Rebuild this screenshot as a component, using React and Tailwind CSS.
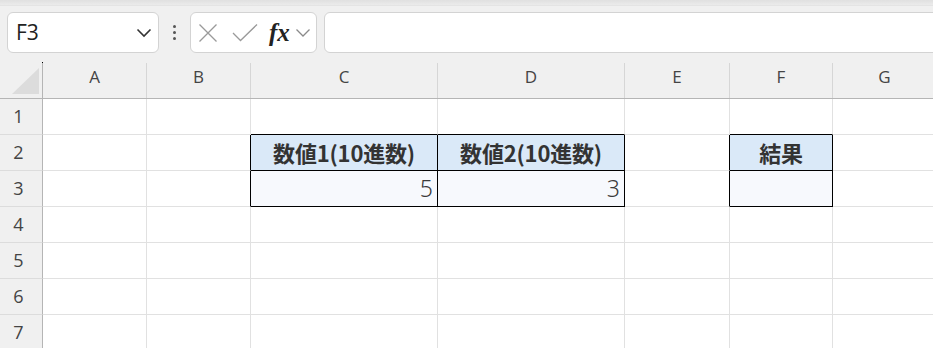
import React from "react";

const cols = [
  { key: "A", w: "w-[104px]" },
  { key: "B", w: "w-[104px]" },
  { key: "C", w: "w-[187px]" },
  { key: "D", w: "w-[187px]" },
  { key: "E", w: "w-[105px]" },
  { key: "F", w: "w-[103px]" },
  { key: "G", w: "w-[104px]" },
];

const cells = {
  C2: { text: "数値1(10進数)", head: true },
  D2: { text: "数値2(10進数)", head: true },
  F2: { text: "結果", head: true },
  C3: { text: "5" },
  D3: { text: "3" },
  F3: { text: "" },
};

function borders(r, c) {
  const right = (r === 2 || r === 3) && ["B", "C", "D", "E", "F"].includes(c);
  const bottom = (r >= 1 && r <= 3) && ["C", "D", "F"].includes(c);
  return [
    right ? "border-r-black" : "border-r-[#e1e1e1]",
    bottom ? "border-b-black" : "border-b-[#e1e1e1]",
  ].join(" ");
}

function Cell({ r, c, w }) {
  const data = cells[c + r];
  let bg = "bg-white";
  if (data) bg = data.head ? "bg-[#dae9f8]" : "bg-[#f7f9fd]";
  return (
    <div
      className={`${w} shrink-0 h-full border-r border-b ${borders(r, c)} ${bg} flex items-center ${
        data && data.head ? "justify-center" : "justify-end pr-[4px]"
      }`}
    >
      {data && data.head && (
        <span className="text-[22px] font-bold text-[#333] tracking-[-0.2px]">{data.text}</span>
      )}
      {data && !data.head && (
        <span
          className="text-[23px] text-[#3a3a3a]"
          style={{ fontFamily: '"Noto Sans", "Open Sans", sans-serif', fontWeight: 300 }}
        >
          {data.text}
        </span>
      )}
    </div>
  );
}

export default function App() {
  return (
    <div
      className="w-[933px] h-[348px] overflow-hidden bg-[#f0f0f0] relative"
      style={{ fontFamily: '"Noto Sans CJK JP", "Noto Sans", sans-serif' }}
    >
      {/* toolbar */}
      <div className="h-[63px] relative">
        <div className="h-[6px] bg-gradient-to-b from-[#e0e0e0] to-[#ebebeb] border-b border-[#e4e4e4]" />
        <div className="flex items-start pt-[6px] pl-[7px]">
          <div className="w-[152px] shrink-0 h-[41px] bg-white border border-[#d3d3d3] rounded-[6px] flex items-center justify-between pl-[8px] pr-[6px]">
            <span
              className="text-[21px] text-[#222]"
              style={{ fontFamily: '"Open Sans", "Liberation Sans", sans-serif' }}
            >
              F3
            </span>
            <svg width="16" height="10" viewBox="0 0 16 10" fill="none">
              <path d="M1.5 1.5 L8 8 L14.5 1.5" stroke="#333" strokeWidth="1.6" />
            </svg>
          </div>
          <div className="w-[31px] shrink-0 h-[41px] flex flex-col items-center justify-center gap-[3px]">
            <div className="w-[3px] h-[3px] bg-[#555] rounded-full" />
            <div className="w-[3px] h-[3px] bg-[#555] rounded-full" />
            <div className="w-[3px] h-[3px] bg-[#555] rounded-full" />
          </div>
          <div className="w-[127px] shrink-0 h-[41px] bg-white border border-[#d3d3d3] rounded-[6px] flex items-center pl-[7px]">
            <svg width="20" height="20" viewBox="0 0 20 20" fill="none">
              <path d="M1.5 1.5 L18.5 18.5 M18.5 1.5 L1.5 18.5" stroke="#9a9a9a" strokeWidth="1.3" />
            </svg>
            <svg width="26" height="18" viewBox="0 0 26 18" fill="none" className="ml-[14px]">
              <path d="M1 9 L8.5 16.5 L25 0.5" stroke="#9a9a9a" strokeWidth="1.3" />
            </svg>
            <span
              className="ml-[11px] text-[25px] italic font-bold text-[#222] leading-none"
              style={{ fontFamily: '"Liberation Serif", "DejaVu Serif", serif' }}
            >
              fx
            </span>
            <svg width="16" height="10" viewBox="0 0 16 10" fill="none" className="ml-[5px]">
              <path d="M1.5 1.5 L8 8 L14.5 1.5" stroke="#8a8a8a" strokeWidth="1.3" />
            </svg>
          </div>
          <div className="ml-[7px] w-[640px] shrink-0 h-[41px] bg-white border border-[#d3d3d3] rounded-[6px]" />
        </div>
      </div>

      {/* column header */}
      <div className="flex h-[36px] border-b border-[#b5b5b5]">
        <div className="w-[43px] shrink-0 h-full border-r border-[#b5b5b5] relative">
          <div className="absolute left-[12px] top-[5px] w-0 h-0 border-l-[27px] border-l-transparent border-b-[26px] border-b-[#dcdcdc]" />
          <div className="absolute right-[-1px] top-[-1px] w-[1px] h-[1px] bg-black" />
        </div>
        {cols.map((col) => (
          <div
            key={col.key}
            className={`${col.w} shrink-0 h-full border-r border-[#d6d6d6] flex items-center justify-center pb-[8px]`}
          >
            <span
              className="text-[17px] text-[#444]"
              style={{ fontFamily: '"Open Sans", "Liberation Sans", sans-serif' }}
            >
              {col.key}
            </span>
          </div>
        ))}
      </div>

      {/* rows */}
      {[1, 2, 3, 4, 5, 6, 7].map((r) => (
        <div key={r} className="flex h-[36px]">
          <div className="w-[43px] shrink-0 h-full bg-[#f0f0f0] border-r border-r-[#b5b5b5] border-b border-b-[#dcdcdc] flex items-center justify-center pr-[5px]">
            <span
              className="text-[18px] text-[#444]"
              style={{ fontFamily: '"Open Sans", "Liberation Sans", sans-serif' }}
            >
              {r}
            </span>
          </div>
          {cols.map((col) => (
            <Cell key={col.key} r={r} c={col.key} w={col.w} />
          ))}
        </div>
      ))}
    </div>
  );
}
